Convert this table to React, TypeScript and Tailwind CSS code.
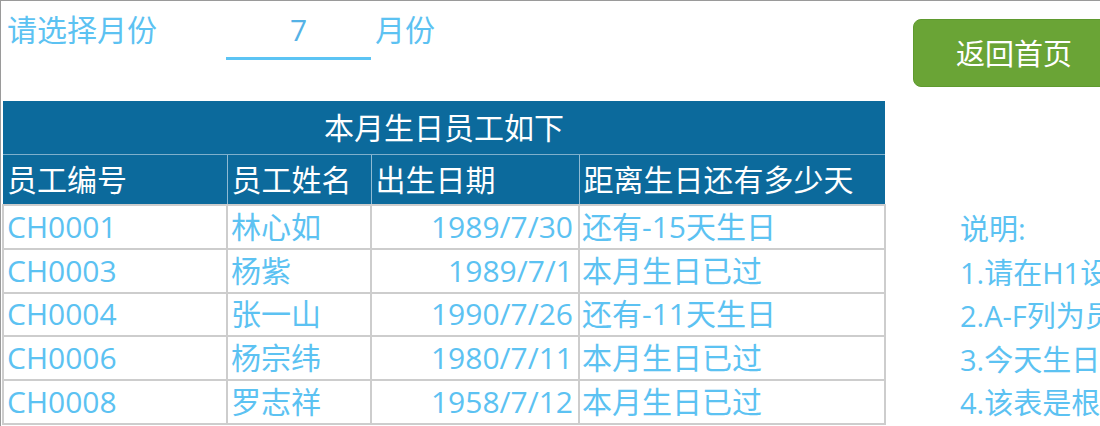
import React from "react";

const rows = [
  { id: "CH0001", name: "林心如", birth: "1989/7/30", note: "还有-15天生日" },
  { id: "CH0003", name: "杨紫", birth: "1989/7/1", note: "本月生日已过" },
  { id: "CH0004", name: "张一山", birth: "1990/7/26", note: "还有-11天生日" },
  { id: "CH0006", name: "杨宗纬", birth: "1980/7/11", note: "本月生日已过" },
  { id: "CH0008", name: "罗志祥", birth: "1958/7/12", note: "本月生日已过" },
];

const notes = [
  "说明:",
  "1.请在H1设置需要查询的月份",
  "2.A-F列为员工基本信息",
  "3.今天生日的员工会自动标出",
  "4.该表是根据出生日期计算的",
];

export default function App() {
  return (
    <div className="w-[1100px] h-[426px] overflow-hidden bg-white border-t border-l border-[#9a9a9a] flex font-['Open_Sans','Noto_Sans_CJK_SC',sans-serif] text-[#5cc2f2]">
      {/* left: month picker + table */}
      <div className="w-[883px] shrink-0 flex flex-col">
        <div className="h-[100px] flex items-start pt-[11px] text-[30px] leading-[36px]">
          <span className="pl-[6px] w-[225px]">请选择月份</span>
          <div className="w-[145px] h-[48px] border-b-[3px] border-[#5cc4f4] text-center text-[#55b2e6]">
            7
          </div>
          <span className="pl-[4px]">月份</span>
        </div>
        <table className="ml-[1px] w-[882px] table-fixed border-collapse text-[30px]">
          <colgroup>
            <col className="w-[224px]" />
            <col className="w-[144px]" />
            <col className="w-[208px]" />
            <col className="w-[306px]" />
          </colgroup>
          <thead>
            <tr className="h-[53px] bg-[#0c6a9c]">
              <th
                colSpan={4}
                className="font-normal text-white text-center border-b border-[#7fb0cc]"
              >
                本月生日员工如下
              </th>
            </tr>
            <tr className="h-[51px] bg-[#0c6a9c]">
              {["员工编号", "员工姓名", "出生日期", "距离生日还有多少天"].map((h) => (
                <th
                  key={h}
                  className="font-normal text-white text-left px-[4px] border-r border-[#8fbad3] last:border-r-0 whitespace-nowrap"
                >
                  {h}
                </th>
              ))}
            </tr>
          </thead>
          <tbody>
            {rows.map((r) => (
              <tr key={r.id} className="h-[43.8px] leading-[36px]">
                <td className="px-[3px] border-2 border-[#cdcdcd]">{r.id}</td>
                <td className="px-[3px] border-2 border-[#cdcdcd]">{r.name}</td>
                <td className="px-[5px] border-2 border-[#cdcdcd] text-right">{r.birth}</td>
                <td className="px-[2px] border-2 border-[#cdcdcd] whitespace-nowrap">{r.note}</td>
              </tr>
            ))}
          </tbody>
        </table>
      </div>

      {/* right: button + notes */}
      <div className="flex-1 min-w-0 flex flex-col">
        <button className="ml-[29px] mt-[18px] w-[205px] h-[68px] shrink-0 rounded-lg bg-[#6aa436] border border-[#5f9a2f] text-white text-[29px] text-left pl-[42px] font-['Noto_Sans_CJK_SC',sans-serif]">
          返回首页
        </button>
        <div className="ml-[76px] mt-[120px] text-[29px] leading-[43.6px] whitespace-nowrap">
          {notes.map((n) => (
            <div key={n}>{n}</div>
          ))}
        </div>
      </div>
    </div>
  );
}
